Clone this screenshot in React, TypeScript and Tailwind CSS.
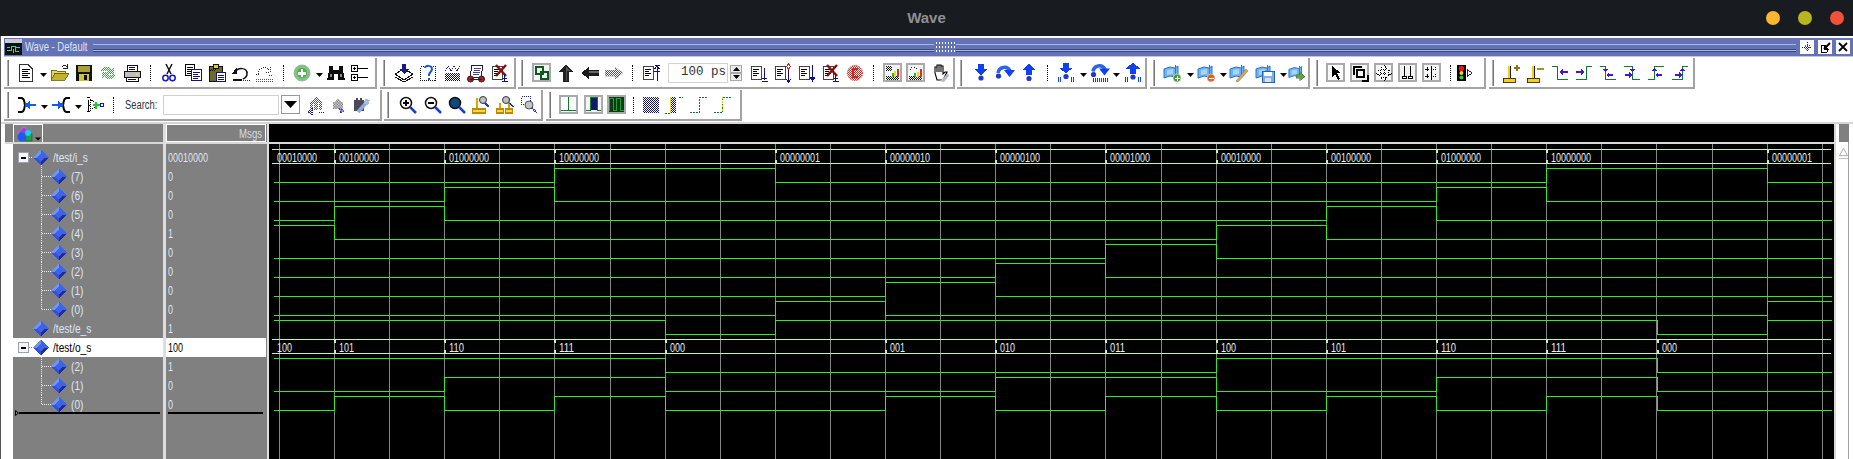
import React from 'react';

const FONT = "font-['Liberation_Sans',Arial,sans-serif]";

// ---------- icon bits ----------
const Ic: React.FC<{ children: React.ReactNode; s?: number }> = ({ children, s = 20 }) => (
  <svg width={s} height={s} viewBox="0 0 20 20" shapeRendering="crispEdges" fill="none">
    {children}
  </svg>
);

const Lines = ({ x = 5, y = 5, n = 4, w = 6, c = '#000' }) => (
  <>
    {Array.from({ length: n }).map((_, i) => (
      <rect key={i} x={x} y={y + i * 2} width={i % 2 ? w - 2 : w} height="1" fill={c} />
    ))}
  </>
);

const Doc = () => (
  <>
    <rect x="2.5" y="3.5" width="10" height="13" fill="#fff" stroke="#444" />
    <Lines x={4} y={6} n={4} w={6} />
  </>
);

const Framed: React.FC<{ children: React.ReactNode; bg?: string }> = ({ children, bg = '#fff' }) => (
  <Ic>
    <rect x="1" y="1" width="17" height="17" fill={bg} stroke="#aaa" strokeWidth="1.5" />
    {children}
  </Ic>
);

const Zoom: React.FC<{ children?: React.ReactNode; fill?: string }> = ({ children, fill = '#fff' }) => (
  <Ic>
    <circle cx="8" cy="8" r="5.5" fill={fill} stroke="#111" strokeWidth="1.5" shapeRendering="auto" />
    <path d="M12 12l6 6" stroke="#1a3fd0" strokeWidth="2.5" shapeRendering="auto" />
    {children}
  </Ic>
);

const StepDown = () => (
  <>
    <path d="M7 1h6v5h4l-7 6-7-6h4z" fill="#1040f0" />
    <circle cx="10" cy="15" r="2.6" fill="#2038c8" shapeRendering="auto" />
  </>
);
const StepUp = () => (
  <>
    <path d="M10 1l7 6h-4v5H7V7H3z" fill="#1040f0" />
    <circle cx="10" cy="15.500" r="2.6" fill="#2038c8" shapeRendering="auto" />
  </>
);
const StepOver = () => (
  <>
    <path d="M3 10c1-6 9-8 12-2" stroke="#2a66e8" strokeWidth="3.500" shapeRendering="auto" />
    <path d="M9 7h11l-5.500 7z" fill="#1040f0" shapeRendering="auto" />
    <circle cx="3.500" cy="13" r="2.600" fill="#2038c8" shapeRendering="auto" />
  </>
);
const Bars = ({ y = 14 }) => (
  <>
    {[2, 4, 15, 17].map((x) => (
      <rect key={x} x={x} y={y} width="1" height="5" fill="#1040f0" />
    ))}
  </>
);

const Flag = () => (
  <>
    <path d="M1 6l6-2 5 1 3-2v9l-3 2-5-1-6 2z" fill="#6fb4f2" stroke="#2a70c8" shapeRendering="auto" />
    <path d="M4 7l6-1v5l-6 1z" fill="#a8d4f8" shapeRendering="auto" />
    <rect x="12" y="2" width="1" height="12" fill="#8a6a30" />
  </>
);
const Badge = ({ c = '#4a9a3a', minus = false }) => (
  <>
    <circle cx="14" cy="15" r="4" fill={c} stroke="#fff" strokeWidth=".5" shapeRendering="auto" />
    <rect x="12" y="14.500" width="5" height="1.500" fill="#fff" />
    {!minus && <rect x="13.800" y="12.800" width="1.500" height="5" fill="#fff" />}
  </>
);

const Cursor: React.FC<{ children?: React.ReactNode }> = ({ children }) => (
  <Ic>
    <rect x="2" y="15" width="12" height="4" fill="#f6cf1a" stroke="#111" strokeWidth=".8" />
    <rect x="7" y="3" width="2" height="12" fill="#f6cf1a" />
    <rect x="9" y="3" width="1" height="12" fill="#222" />
    {children}
  </Ic>
);

const ARROW = '#4a12d8';
const EdgeA: React.FC<{ d: string; children: React.ReactNode }> = ({ d, children }) => (
  <Ic>
    <path d={d} stroke="#0d7d2c" />
    {children}
  </Ic>
);
// small marker triangle sitting on the edge, plus a thin horizontal arrow beside it
const Tri = ({ x, up }: { x: number; up?: boolean }) => (
  <path d={up ? `M${x - 3} 8h7l-3.500-3z` : `M${x - 3} 6h7l-3.500 3z`} fill={ARROW} />
);
const ArrL = ({ x }: { x: number }) => <path d={`M${x} 12l3-3v2h4v2h-4v2z`} fill={ARROW} />;
const ArrR = ({ x }: { x: number }) => <path d={`M${x + 7} 12l-3-3v2h-4v2h4v2z`} fill={ARROW} />;

// ---------- toolbar pieces ----------
const Slot: React.FC<{ children: React.ReactNode; className?: string }> = ({ children, className = 'w-[24px]' }) => (
  <div className={`${className} shrink-0 flex items-center justify-center`}>{children}</div>
);

const Caret = () => (
  <div className="w-[10px] shrink-0 flex items-center justify-center pt-[4px]">
    <svg width="7" height="4" viewBox="0 0 7 4"><path d="M0 0h7L3.500 4z" fill="#000" /></svg>
  </div>
);

const Sep = () => (
  <div className="w-[13px] shrink-0 flex items-center justify-center">
    <div className="h-[16px] border-l border-dotted border-black" />
  </div>
);

const Group: React.FC<{ children: React.ReactNode; className: string }> = ({ children, className }) => (
  <div className={`${className} shrink-0 h-full flex items-center bg-white border-r-2 border-b-2 border-[#a3a3a3]`}>
    <div className="ml-[3px] mr-[5px] w-[2px] h-[26px] bg-[#b0b0b0] border-r border-[#777]" />
    {children}
  </div>
);

const Spin = ({ up }: { up?: boolean }) => (
  <div className="h-[8px] flex items-center justify-center bg-[#ececec] border border-[#a8a8a8]">
    <svg width="7" height="4" viewBox="0 0 7 4">
      <path d={up ? 'M0 4h7L3.500 0z' : 'M0 0h7L3.500 4z'} fill="#000" />
    </svg>
  </div>
);

// ---------- wave data ----------
const I_S: [number, string][] = [
  [273, '00010000'], [334, '00100000'], [444, '01000000'], [554, '10000000'], [775, '00000001'],
  [885, '00000010'], [995, '00000100'], [1105, '00001000'], [1216, '00010000'], [1326, '00100000'],
  [1436, '01000000'], [1546, '10000000'], [1767, '00000001'],
];
const O_S: [number, string][] = [
  [273, '100'], [334, '101'], [444, '110'], [554, '111'], [665, '000'], [885, '001'], [995, '010'],
  [1105, '011'], [1216, '100'], [1326, '101'], [1436, '110'], [1546, '111'], [1657, '000'],
];
const END = 1831;
const GREEN = '#2cef1c';
const BUS = '#c0f4bc';

const bitLine = (segs: [number, boolean][], low: number) => {
  const hi = low - 14 + 0.5;
  const lo = low + 0.5;
  const pts: string[] = [];
  segs.forEach(([x, v], i) => {
    const y = v ? hi : lo;
    const next = i + 1 < segs.length ? segs[i + 1][0] : END;
    pts.push(`${x + 0.5},${y}`, `${next + 0.5},${y}`);
  });
  return pts.join(' ');
};

const Bus = ({ segs, top }: { segs: [number, string][]; top: number }) => (
  <g>
    <path d={`M272 ${top + 0.5}H${END}M272 ${top + 14.5}H${END}`} stroke={BUS} />
    {segs.slice(1).map(([x]) => (
      <path key={x} d={`M${x + 0.5} ${top}v4M${x + 0.5} ${top + 11}v4`} stroke={BUS} strokeWidth="2" />
    ))}
    {segs.map(([x, v], i) => (
      <text
        key={i}
        x={i === 0 ? 277 : x + 5}
        y={top + 12.5}
        fill="#e6f0fc"
        fontSize="13"
        textLength={v.length * 5}
        lengthAdjust="spacingAndGlyphs"
        shapeRendering="auto"
        style={{ fontFamily: "'Liberation Sans', Arial, sans-serif" }}
      >
        {v}
      </text>
    ))}
  </g>
);

const WaveForm = () => {
  const grid = Array.from({ length: 29 }).map((_, k) => Math.round(278.9 + 55.1 * k) + 0.5);
  const iBits = [7, 6, 5, 4, 3, 2, 1, 0];
  const oBits = [2, 1, 0];
  return (
    <svg width="1565" height="315" viewBox="269 144 1565 315" className="block" shapeRendering="crispEdges">
      {grid.map((x) => (
        <path key={x} d={`M${x} 144V459`} stroke="#858585" />
      ))}
      <Bus segs={I_S} top={149} />
      {iBits.map((bit, k) => (
        <polyline
          key={bit}
          fill="none"
          stroke={GREEN}
          points={bitLine(I_S.map(([x, v]) => [x, v[7 - bit] === '1'] as [number, boolean]), 182 + 19 * k)}
        />
      ))}
      <polyline
        fill="none"
        stroke={GREEN}
        points={bitLine([[273, true], [665, false], [775, true], [1657, false], [1767, true]], 334)}
      />
      <Bus segs={O_S} top={339} />
      {oBits.map((bit, k) => (
        <polyline
          key={bit}
          fill="none"
          stroke={GREEN}
          points={bitLine(O_S.map(([x, v]) => [x, v[2 - bit] === '1'] as [number, boolean]), 372 + 19 * k)}
        />
      ))}
    </svg>
  );
};

// ---------- signal list ----------
const Diamond = ({ cx }: { cx: number }) => (
  <g transform={`translate(${cx} 9.500)`}>
    <path d="M0 -8L-8 0H0z" fill="#6e94f4" />
    <path d="M0 -8L8 0H0z" fill="#3c66e6" />
    <path d="M-8 0L0 8V0z" fill="#3550d4" />
    <path d="M8 0L0 8V0z" fill="#1e2c9c" />
    <path d="M0 -4L4 0L0 4L-4 0z" fill="#3f63e8" />
  </g>
);

type Row = { name: string; val: string; kind: 'bus' | 'child' | 'last' | 'plain'; sel?: boolean };
const ROWS: Row[] = [
  { name: '/test/i_s', val: '00010000', kind: 'bus' },
  { name: '(7)', val: '0', kind: 'child' },
  { name: '(6)', val: '0', kind: 'child' },
  { name: '(5)', val: '0', kind: 'child' },
  { name: '(4)', val: '1', kind: 'child' },
  { name: '(3)', val: '0', kind: 'child' },
  { name: '(2)', val: '0', kind: 'child' },
  { name: '(1)', val: '0', kind: 'child' },
  { name: '(0)', val: '0', kind: 'last' },
  { name: '/test/e_s', val: '1', kind: 'plain' },
  { name: '/test/o_s', val: '100', kind: 'bus', sel: true },
  { name: '(2)', val: '1', kind: 'child' },
  { name: '(1)', val: '0', kind: 'child' },
  { name: '(0)', val: '0', kind: 'last' },
];

const Glyph = ({ row }: { row: Row }) => {
  const child = row.kind === 'child' || row.kind === 'last';
  const w = child ? 57 : 39;
  return (
    <svg width={w} height="19" viewBox={`0 0 ${w} 19`} className="shrink-0" shapeRendering="crispEdges" fill="none">
      {row.kind === 'bus' && (
        <>
          <path d="M16 9.500H20" stroke={row.sel ? '#888' : '#eee'} strokeDasharray="1 1" />
          <rect x="5.500" y="4.500" width="10" height="10" fill="#f4f6fa" stroke="#9aa0b0" />
          <rect x="8" y="9" width="5" height="2" fill="#000" />
          <path d="M28.500 15V19" stroke="#eee" strokeDasharray="1 1" />
        </>
      )}
      {child && (
        <>
          <path d={row.kind === 'last' ? 'M28.500 0V9.500H38' : 'M28.500 0V19M28.500 9.500H38'} stroke="#eee" strokeDasharray="1 1" />
          <Diamond cx={46} />
        </>
      )}
      {!child && <Diamond cx={28} />}
    </svg>
  );
};

const Narrow: React.FC<{ children: React.ReactNode; k?: string }> = ({ children, k = 'scale-x-[0.8]' }) => (
  <span className={`inline-block whitespace-nowrap origin-left ${k}`}>{children}</span>
);

// ---------- page ----------
export default function App() {
  return (
    <div className={`w-[1853px] h-[459px] overflow-hidden flex flex-col bg-white text-[12px] ${FONT}`}>
      <svg width="0" height="0" className="absolute">
        <defs>
          {[
            ['dGreen', '#4aa24a'],
            ['dGray', '#555'],
            ['dBlack', '#111'],
            ['dRed', '#d8201c'],
            ['dBlue', '#1a1acc'],
            ['dNavy', '#101080'],
          ].map(([id, c]) => (
            <pattern key={id} id={id} width="2" height="2" patternUnits="userSpaceOnUse">
              <rect width="1" height="1" fill={c} />
              <rect x="1" y="1" width="1" height="1" fill={c} />
            </pattern>
          ))}
        </defs>
      </svg>

      {/* Desktop title bar */}
      <div className="h-[36px] shrink-0 bg-[#181b20] flex items-center relative">
        <div className="flex-1 text-center text-[15px] font-bold text-[#8f9092]">Wave</div>
        <div className="absolute right-[9px] top-[11px] flex gap-[18px]">
          <div className="w-[14px] h-[14px] rounded-full bg-[#fbb62f]" />
          <div className="w-[14px] h-[14px] rounded-full bg-[#b9b521]" />
          <div className="w-[14px] h-[14px] rounded-full bg-[#f2503a]" />
        </div>
      </div>

      <div className="flex-1 min-h-0 flex flex-col border-l border-[#555] pt-[2px]">
        {/* Wave - Default bar */}
        <div className="h-[19px] ml-[3px] shrink-0 bg-[#6373b6] flex items-center border-b border-[#c8c8c8]">
          <div className="w-[17px] h-[16px] ml-[1px] shrink-0">
            <svg width="17" height="16" viewBox="0 0 17 16" shapeRendering="crispEdges">
              <rect width="17" height="16" fill="#111" />
              <rect x="0" y="0" width="17" height="4" fill="#c8ccd8" />
              <path d="M2 11.500H6V7.500H10V12.500H14" stroke="#1fe07a" fill="none" />
              <path d="M2 8.500H5M8 13.500V9.500M11 8.500H15" stroke="#37c8e8" fill="none" />
            </svg>
          </div>
          <div className="w-[71px] shrink-0 pl-[3px] text-[13px] text-[#dfe3f6]">
            <Narrow k="scale-x-[0.73]">Wave - Default</Narrow>
          </div>
          <div className="flex-1 h-[7px] border-y border-[#a9b6ef] bg-[#6373b6] shadow-[0_1px_0_#3d4778,inset_0_-1px_0_#3d4778]" />
          <div className="w-[20px] h-[12px] mx-[1px] shrink-0 bg-[radial-gradient(#fff_1px,transparent_1px)] bg-[length:3px_4px]" />
          <div className="flex-1 h-[7px] border-y border-[#a9b6ef] bg-[#6373b6] shadow-[0_1px_0_#3d4778,inset_0_-1px_0_#3d4778]" />
          <div className="flex gap-[4px] ml-[4px] mr-[3px] shrink-0">
            <div className="w-[14px] h-[14px] bg-white flex items-center justify-center">
              <svg width="10" height="10" viewBox="0 0 10 10" shapeRendering="crispEdges" fill="none">
                <path d="M5 0v10M0 5h10" stroke="#222" strokeDasharray="1 1" />
                <path d="M3 3h4v4H3z" stroke="#666" strokeDasharray="1 1" />
              </svg>
            </div>
            <div className="w-[14px] h-[14px] bg-white flex items-center justify-center">
              <svg width="11" height="11" viewBox="0 0 11 11" shapeRendering="crispEdges" fill="none">
                <path d="M1 3.500h5M1.500 3v7M1 10h6M7 7v3" stroke="#000" />
                <path d="M4 7L10 1" stroke="#000" strokeWidth="2" shapeRendering="auto" />
                <path d="M4 3v5h5z" fill="#000" />
              </svg>
            </div>
            <div className="w-[14px] h-[14px] bg-white flex items-center justify-center">
              <svg width="10" height="10" viewBox="0 0 10 10">
                <path d="M1 1l8 8M9 1L1 9" stroke="#000" strokeWidth="1.800" />
              </svg>
            </div>
          </div>
        </div>

        {/* Toolbar row 1 */}
        <div className="h-[31px] mt-[1px] shrink-0 flex pl-[3px]">
          <Group className="w-[373px] mr-[3px]">
            <Slot><Ic><path d="M3.500 1.500H12L16.500 6V18.500H3.500z" fill="#fff" stroke="#333" /><Lines x={6} y={6} n={5} w={8} /></Ic></Slot>
            <Caret />
            <Slot><Ic><path d="M1 7h5l1 1h8v2H5L1 17z" fill="#e8d860" stroke="#5a5a10" strokeWidth=".8" /><path d="M1 17l4-7h14l-4 7z" fill="#c4b22a" stroke="#5a5a10" strokeWidth=".8" /><path d="M12 4c2-2 4-2 5 0M17 1v4h-4" stroke="#222" /></Ic></Slot>
            <Slot><Ic><rect x="2" y="2" width="16" height="16" fill="#111" /><rect x="4" y="3" width="12" height="6" fill="#a8a030" /><rect x="5" y="11" width="10" height="7" fill="#c8c440" /><rect x="10" y="12" width="3" height="5" fill="#111" /></Ic></Slot>
            <Slot><Ic><path d="M3 9c0-5 7-7 11-3l2-2v7h-7l2-2c-3-2-5-1-8 0zM17 11c0 5-7 7-11 3l-2 2V9h7l-2 2c3 2 5 1 8 0z" fill="url(#dGreen)" /></Ic></Slot>
            <Slot><Ic><path d="M5 2h10v6H5z" fill="#fff" stroke="#111" /><path d="M2 8h16v6H2z" fill="#c0c0c0" stroke="#111" /><path d="M4 14h12v4H4z" fill="#fff" stroke="#111" /><path d="M7 4h6M7 6h6M6 16h8" stroke="#111" /><rect x="14" y="10" width="2" height="2" fill="#e8e040" /></Ic></Slot>
            <Sep />
            <Slot><Ic><path d="M7 1l5 10M13 1L8 11" stroke="#111" strokeWidth="1.500" shapeRendering="auto" /><circle cx="6.500" cy="15" r="2.700" stroke="#1414d0" strokeWidth="1.500" shapeRendering="auto" /><circle cx="13.500" cy="15" r="2.700" stroke="#1414d0" strokeWidth="1.500" shapeRendering="auto" /></Ic></Slot>
            <Slot><Ic><rect x="2.500" y="1.500" width="9" height="11" fill="#fff" stroke="#000" /><Lines x={4} y={4} n={4} w={6} /><rect x="8.500" y="6.500" width="10" height="11" fill="#fff" stroke="#101080" /><Lines x={10} y={9} n={4} w={7} c="#101080" /></Ic></Slot>
            <Slot><Ic><rect x="2" y="3" width="13" height="15" fill="#6e6a2a" stroke="#111" /><path d="M6 1h5v4H6z" fill="#e0d040" stroke="#111" /><rect x="9.500" y="9.500" width="9" height="9" fill="#fff" stroke="#101080" /><path d="M11 12h6M11 14h6M11 16h6" stroke="#101080" /><rect x="3" y="6" width="6" height="2" fill="url(#dBlack)" /></Ic></Slot>
            <Slot><Ic><path d="M4 10c2-6 13-6 12 1 0 3-2 4-4 5" stroke="#111" strokeWidth="1.500" shapeRendering="auto" /><path d="M6 4v7H1z" fill="#111" /><rect x="2" y="16" width="9" height="2" fill="#111" /><path d="M12 17h7" stroke="#333" strokeDasharray="1 1" /></Ic></Slot>
            <Slot><Ic><path d="M3 11c0-6 7-8 12-4M15 4v5h-4M1 11h3M14 12h4" stroke="#333" strokeDasharray="1 1" /><path d="M1 16h18M1 18h18" stroke="#555" strokeDasharray="1 1" /></Ic></Slot>
            <Sep />
            <Slot><Ic><circle cx="10" cy="10" r="8" fill="#7cc47e" stroke="#9fb89f" shapeRendering="auto" /><circle cx="10" cy="10" r="5" fill="#56a95a" shapeRendering="auto" /><rect x="6" y="9" width="8" height="2.500" fill="#fff" /><rect x="8.800" y="6" width="2.500" height="8" fill="#fff" /></Ic></Slot>
            <Caret />
            <Slot><Ic><path d="M3 3h4v4h6V3h4v5l2 9h-7V11H8v6H1l2-9z" fill="#0c0c0c" /><rect x="4" y="11" width="2" height="3" fill="#888" /><rect x="14" y="11" width="2" height="3" fill="#888" /></Ic></Slot>
            <Slot><Ic><rect x="1.500" y="2.500" width="6" height="6" fill="#fff" stroke="#000" /><rect x="1.500" y="11.500" width="6" height="6" fill="#fff" stroke="#000" /><path d="M3 5.500h3M4.500 4v3M3 14.500h3M4.500 13v3M8 5.500h10M8 14.500h10" stroke="#000" /></Ic></Slot>
          </Group>
          <Group className="w-[136px] mr-[2px]">
            <Slot className="w-[25px] ml-[1px]"><Ic><path d="M1 11l9-5 9 5-9 6z" fill="#fff" stroke="#111" /><path d="M1 14l9 5 9-5" stroke="#111" /><path d="M8 1h4v5h3l-5 5-5-5h3z" fill="#1a1a8c" /></Ic></Slot>
            <Slot><Ic><rect x="2.500" y="3.500" width="15" height="14" fill="#fff" stroke="#111" strokeDasharray="1 1" /><path d="M7 5c0-3 7-3 7 1 0 3-3 3-3 6v1M11 15v2" stroke="#1a58d8" strokeWidth="2" shapeRendering="auto" /></Ic></Slot>
            <Slot><Ic><rect x="3" y="10" width="15" height="8" fill="url(#dBlack)" /><path d="M3 8l3-5 3 5 3-5 3 5 3-5" stroke="#18188c" strokeDasharray="1 1" /></Ic></Slot>
            <Slot><Ic><path d="M6 2h11l-2 12H4z" fill="#fff" stroke="#222" /><path d="M8 5h7M8 7h6M7 9h7M7 11h6" stroke="#44468c" /><circle cx="4.500" cy="16" r="3" fill="#c01820" stroke="#222" shapeRendering="auto" /><circle cx="15.500" cy="16" r="3" fill="#c01820" stroke="#222" shapeRendering="auto" /><path d="M4 16h12" stroke="#222" /></Ic></Slot>
            <Slot><Ic><Doc /><path d="M6 2l10 11M16 2L6 13" stroke="#8a1010" strokeWidth="2.500" shapeRendering="auto" /><path d="M14.500 11v7M12 18.500h6M12.500 15h4" stroke="#101080" /></Ic></Slot>
          </Group>
          <Group className="w-[437px] mr-[2px]">
            <Slot className="w-[25px] ml-[1px]"><Framed bg="#f4f4f4"><rect x="3.500" y="3.500" width="7" height="7" stroke="#0b5c1c" strokeWidth="2" /><rect x="8.500" y="8.500" width="7" height="7" stroke="#0b5c1c" strokeWidth="2" /></Framed></Slot>
            <Slot><Ic><path d="M10 1l7 8h-4v10H7V9H3z" fill="#222" /><path d="M10 3l4 5h-3v10h-1z" fill="#555" /></Ic></Slot>
            <Slot><Ic><path d="M1 10l8-6v3h10v6H9v3z" fill="#1b1b1b" /><rect x="9" y="8" width="10" height="2" fill="#666" /></Ic></Slot>
            <Slot><Ic><path d="M19 10l-8-6v3H1v6h10v3z" fill="url(#dGray)" stroke="#999" strokeWidth=".4" /></Ic></Slot>
            <Sep />
            <Slot><Ic><Doc /><path d="M16 3v15M13.500 6L16 3l2.500 3M13.500 2.500h5" stroke="#101080" /><path d="M13 8h6" stroke="#101080" /></Ic></Slot>
            <div className="ml-[5px] w-[60px] h-[20px] shrink-0 border border-[#d4d4d4] bg-white flex items-center justify-end pr-[1px] font-['Liberation_Mono',monospace] text-[12.5px] text-[#333]">100 ps</div>
            <div className="ml-[2px] mr-[5px] w-[12px] shrink-0 flex flex-col">
              <Spin up />
              <Spin />
            </div>
            <Slot><Ic><Doc /><path d="M15.500 5v12M13 18.500h6M13 15h5" stroke="#101080" /></Ic></Slot>
            <Slot><Ic><Doc /><path d="M15.500 6v12M13 16l2.500 3 2.500-3" stroke="#101080" /><path d="M15.500 1l2 2.500-2 2.500-2-2.500z" fill="#fff" stroke="#e02020" /></Ic></Slot>
            <Slot><Ic><Doc /><path d="M15.500 2v15M13 14h5l-2.500 4z" stroke="#101080" fill="#101080" /></Ic></Slot>
            <Slot><Ic><Doc /><path d="M6 2l10 11M16 2L6 13" stroke="#8a1010" strokeWidth="2.500" shapeRendering="auto" /><path d="M14.500 11v7M12 18.500h6M12.500 15h4" stroke="#101080" /></Ic></Slot>
            <Slot><Ic><circle cx="10" cy="10" r="7.500" fill="url(#dRed)" stroke="#d8201c" strokeDasharray="1 1" shapeRendering="auto" /><path d="M13 6H8v8h5" stroke="#d8201c" strokeWidth="1.500" /></Ic></Slot>
            <Sep />
            <Slot className="w-[23px] ml-[1px]"><Framed bg="#f2f2f2"><rect x="3" y="13" width="13" height="4" fill="url(#dBlack)" /><rect x="3" y="3" width="6" height="5" fill="url(#dBlack)" /><rect x="11" y="8" width="2" height="6" fill="#e8d820" /><rect x="14" y="6" width="2" height="8" fill="#d83020" /><rect x="9" y="10" width="2" height="4" fill="#30b030" /></Framed></Slot>
            <Slot><Framed bg="#f2f2f2"><rect x="3" y="13" width="13" height="4" fill="url(#dBlack)" /><path d="M4 7c0-4 7-4 7 0v3" stroke="#222" strokeDasharray="1 1" /><rect x="11" y="9" width="2" height="5" fill="#e8d820" /><rect x="14" y="6" width="2" height="8" fill="#d83020" /><rect x="8" y="10" width="2" height="4" fill="#30b030" /></Framed></Slot>
            <Slot><Ic><path d="M5 10V4h2v5-7h2v7-7h2v7-6h2v8l2-2h2l-4 8H7z" fill="#fff" stroke="#000" strokeWidth="1.100" shapeRendering="auto" /><path d="M10 18l8-8 1 3-5 6z" fill="#b4bcc8" shapeRendering="auto" /></Ic></Slot>
          </Group>
          <Group className="w-[190px] mr-[3px]">
            <Slot className="w-[25px] ml-[1px]"><Ic><StepDown /></Ic></Slot>
            <Slot><Ic><StepOver /></Ic></Slot>
            <Slot><Ic><StepUp /></Ic></Slot>
            <Sep />
            <Slot><Ic><g transform="translate(0 -1.500)"><StepDown /></g><Bars /></Ic></Slot>
            <Caret />
            <Slot className="w-[23px]"><Ic><g transform="translate(0 -1.500)"><StepOver /></g><path d="M3 15v4M5 15v4M7 15v4M9 15v4M11 15v4M13 15v4M15 15v4M17 15v4" stroke="#1040f0" /></Ic></Slot>
            <Caret />
            <Slot><Ic><g transform="translate(0 -1.500)"><StepUp /></g><Bars /></Ic></Slot>
          </Group>
          <Group className="w-[160px] mr-[3px]">
            <Slot className="w-[24px] ml-[1px]"><Ic><Flag /><Badge /></Ic></Slot>
            <Caret />
            <Slot className="w-[23px]"><Ic><Flag /><Badge c="#d86428" minus /></Ic></Slot>
            <Caret />
            <Slot className="w-[24px] -ml-[1px]"><Ic><Flag /><path d="M7 18l10-12 2 2-10 11z" fill="#d8a860" stroke="#8a6a30" strokeWidth=".5" shapeRendering="auto" /></Ic></Slot>
            <Slot className="w-[27px]"><Ic><Flag /><rect x="7" y="8" width="12" height="11" fill="#7fb0ea" stroke="#2a60b0" /><rect x="9" y="9" width="8" height="4" fill="#fff" /><rect x="10" y="15" width="6" height="4" fill="#d8e4f4" /></Ic></Slot>
            <Caret />
            <Slot className="w-[18px]"><Ic><Flag /><path d="M9 12h4V9l6 5-6 5v-3H9z" fill="#62a04c" stroke="#3c7030" strokeWidth=".5" /></Ic></Slot>
          </Group>
          <Group className="w-[173px] mr-[3px]">
            <Slot className="w-[24px] ml-[1px]"><Framed bg="#fafafa"><path d="M6 3v11l3-3 3 6 2-1-3-6h4z" fill="#000" /></Framed></Slot>
            <Slot><Framed bg="#f4f4f4"><path d="M4 12V4h8" stroke="#000" strokeWidth="1.500" /><rect x="6.500" y="6.500" width="7" height="7" stroke="#000" strokeWidth="2" /><path d="M18 12v6h-6" stroke="#000" strokeWidth="1.500" /></Framed></Slot>
            <Slot><Framed bg="#f4f4f4"><path d="M10 2l3 4H7zM10 18l3-4H7zM2 10l4 3V7zM18 10l-4 3V7z" fill="#fff" stroke="#000" strokeDasharray="1 1" /><path d="M7 10h6M10 7v6" stroke="#000" strokeDasharray="1 1" /></Framed></Slot>
            <Slot><Framed bg="#f4f4f4"><path d="M6.500 3v10M12.500 3v10" stroke="#000" /><rect x="4.500" y="13.500" width="4" height="2" fill="#fff" stroke="#000" /><rect x="10.500" y="13.500" width="4" height="2" fill="#fff" stroke="#000" /></Framed></Slot>
            <Slot><Framed bg="#f4f4f4"><path d="M3 6h4M3 13h4M5 4v4M5 11v4M9.500 3v14" stroke="#000" /><path d="M11 6h4M11 13h4M13 4v4M13 11v4" stroke="#000" strokeDasharray="1 1" /></Framed></Slot>
            <Sep />
            <Slot className="w-[18px] -ml-[1px]"><Ic><rect x="1" y="1" width="10" height="18" fill="#000" /><circle cx="6" cy="5" r="3" fill="#f01010" shapeRendering="auto" /><circle cx="6" cy="10" r="2.200" fill="#e8d820" shapeRendering="auto" /><circle cx="6" cy="15" r="2.200" fill="#30d040" shapeRendering="auto" /><path d="M12.500 6v8L18 10z" fill="#fff" stroke="#111" /></Ic></Slot>
          </Group>
          <Group className="w-[206px]">
            <Slot className="w-[22px] ml-[1px]"><Cursor><path d="M13 5h6M16 2v6" stroke="#8a7a10" strokeWidth="1.500" /></Cursor></Slot>
            <Slot className="w-[26px]"><Cursor><path d="M12 6h7" stroke="#a89414" strokeWidth="1.500" /></Cursor></Slot>
            <Slot><EdgeA d="M2 3.500h5.500v13H18"><path d="M9 9l4-3.500v2.500h5v2h-5v2.500z" fill={ARROW} /></EdgeA></Slot>
            <Slot><EdgeA d="M2 16.500h10.500v-13H18"><path d="M11 9L7 5.500v2.500H2v2h5v2.500z" fill={ARROW} /></EdgeA></Slot>
            <Slot><EdgeA d="M2 3.500h5.500v13H18"><Tri x={7} /><ArrL x={8} /></EdgeA></Slot>
            <Slot><EdgeA d="M2 3.500h8.500v13H18"><Tri x={10} /><ArrR x={3} /></EdgeA></Slot>
            <Slot><EdgeA d="M2 16.500h6.500v-13H18"><Tri x={8} up /><ArrL x={9} /></EdgeA></Slot>
            <Slot><EdgeA d="M2 16.500h10.500v-13H18"><Tri x={12} up /><ArrR x={5} /></EdgeA></Slot>
          </Group>
        </div>

        {/* Toolbar row 2 */}
        <div className="h-[31px] mt-[1px] shrink-0 flex pl-[3px]">
          <Group className="w-[378px] mr-[2px]">
            <Slot className="w-[24px] ml-[1px]"><Ic><path d="M1 3h3c4 0 3 4 4 7-1 3 0 7-4 7H1" stroke="#000" strokeWidth="2" shapeRendering="auto" /><path d="M7 10l6-4v3h6v2h-6v3z" fill="#0e5cf0" /></Ic></Slot>
            <Caret />
            <Slot><Ic><path d="M19 3h-3c-4 0-3 4-4 7 1 3 0 7 4 7h3" stroke="#000" strokeWidth="2" shapeRendering="auto" /><path d="M13 10L7 6v3H1v2h6v3z" fill="#0e5cf0" /></Ic></Slot>
            <Caret />
            <Slot><Ic><path d="M1.500 2.500h3M3 5v12M1.500 16.500h3M3 10h3" stroke="#000" /><path d="M5 4l8 6-8 6z" fill="#fff" stroke="#000" strokeDasharray="1 1" /><path d="M10 6.500h2v2.500h2.500v2H12v2.500h-2V11H7.500V9H10z" fill="#10d020" /><rect x="15.500" y="8.500" width="3" height="3" fill="#fff" stroke="#1414d0" /></Ic></Slot>
            <Sep />
            <div className="w-[38px] ml-[5px] shrink-0 text-[13px] text-[#30343c]"><Narrow k="scale-x-[0.72]">Search:</Narrow></div>
            <div className="w-[116px] h-[20px] shrink-0 border border-[#d0d0d0] bg-white" />
            <div className="ml-[2px] w-[19px] h-[19px] shrink-0 bg-white border border-[#999] flex items-center justify-center">
              <svg width="13" height="7" viewBox="0 0 13 7"><path d="M0 0h13L6.500 7z" fill="#000" /></svg>
            </div>
            <Slot className="w-[28px] ml-[2px]"><Ic><path d="M10 2l6 5v8h-3V8h-1v7H8V8H7v7H4V7z" fill="url(#dGray)" /><path d="M2 17l4-4v8z" fill="url(#dBlue)" stroke="#1414d0" strokeDasharray="1 1" /><path d="M13 17h5" stroke="#1414d0" strokeDasharray="1 1" /></Ic></Slot>
            <Slot className="w-[16px]"><Ic><path d="M10 2l6 5v8h-3V8h-1v7H8V8H7v7H4V7z" fill="url(#dGray)" /><path d="M12 14l6 3-5 3z" fill="url(#dBlue)" stroke="#1414d0" strokeDasharray="1 1" /></Ic></Slot>
            <Slot className="w-[32px]"><Ic><rect x="2" y="5" width="10" height="11" fill="#4a4a58" /><rect x="4" y="3" width="2" height="3" fill="#4a4a58" /><rect x="8" y="3" width="2" height="3" fill="#4a4a58" /><path d="M6 17l8-9" stroke="#8ea8d8" strokeWidth="3.500" shapeRendering="auto" /><path d="M13 4l5 1-2 5-4-1z" fill="#a8bce0" /></Ic></Slot>
          </Group>
          <Group className="w-[159px] mr-[3px]">
            <Slot className="w-[26px] ml-[1px]"><Zoom><path d="M5 8h6M8 5v6" stroke="#000" strokeWidth="2" /></Zoom></Slot>
            <Slot><Zoom><rect x="5" y="7" width="6" height="2" fill="#000" /></Zoom></Slot>
            <Slot><Zoom fill="#0e4a80" /></Slot>
            <Slot><Ic><path d="M5.500 3v11" stroke="#d8a800" strokeWidth="2" /><rect x="1.500" y="14" width="13" height="4" fill="#f6d84a" stroke="#c08800" strokeWidth="1.500" /><circle cx="12" cy="5" r="3.500" fill="#c0c0c8" stroke="#333" shapeRendering="auto" /><path d="M14 8l4 4" stroke="#1a3fd0" strokeWidth="1.500" /></Ic></Slot>
            <Slot><Ic><path d="M4.500 8v6M13.500 3v11" stroke="#d8a800" strokeWidth="2" /><rect x="1.500" y="14" width="7" height="4" fill="#f6d84a" stroke="#c08800" strokeWidth="1.500" /><rect x="10.500" y="14" width="7" height="4" fill="#f6d84a" stroke="#c08800" strokeWidth="1.500" /><circle cx="11" cy="5" r="3.500" fill="#c0c0c8" stroke="#333" shapeRendering="auto" /><path d="M15 8l3 4" stroke="#1a3fd0" strokeWidth="1.500" /></Ic></Slot>
            <Slot><Ic><rect x="2.500" y="1.500" width="9" height="8" stroke="#1414b0" strokeDasharray="1 1" /><circle cx="10" cy="10" r="4" fill="#c4c4c8" stroke="#555" shapeRendering="auto" /><path d="M13 13l5 5" stroke="#1a3fd0" strokeWidth="2" strokeDasharray="1 1" /></Ic></Slot>
          </Group>
          <Group className="w-[196px]">
            <Slot className="w-[24px] ml-[1px]"><Framed bg="#fdfdfd"><path d="M2 15.500h15M9.500 2v13" stroke="#0d7d2c" strokeWidth="1.200" /></Framed></Slot>
            <Slot className="w-[25px]"><Framed bg="#f4f4f4"><rect x="6" y="2" width="7" height="13" fill="#101a6c" /><path d="M2 15.500h4V2.500h7v13h4" stroke="#0d7d2c" /></Framed></Slot>
            <Slot className="w-[21px]"><Framed bg="#0c3c14"><path d="M2 15.500V3h4v12h3V3h4v12h4" stroke="#1ea03c" /></Framed></Slot>
            <Sep />
            <Slot className="w-[22px]"><Ic><rect x="2" y="2" width="16" height="16" fill="#fff" /><rect x="2" y="2" width="16" height="16" fill="url(#dNavy)" /></Ic></Slot>
            <Slot className="w-[24px]"><Ic><path d="M1 18h5M15 2h4" stroke="#0d7d2c" strokeDasharray="2 1" /><rect x="7" y="2" width="5" height="16" fill="url(#dNavy)" /><rect x="6" y="2" width="1" height="16" fill="#e8d820" /></Ic></Slot>
            <Slot className="w-[25px]"><Ic><path d="M1 17.500h9V2.500h9" stroke="#0d7d2c" strokeDasharray="2 1" /></Ic></Slot>
            <Slot className="w-[23px]"><Ic><path d="M1 17.500h8M9.500 17V2.500" stroke="#0d7d2c" strokeDasharray="2 1" /><path d="M9.500 2v15" stroke="#e8d820" strokeDasharray="2 2" /><path d="M10 2.500h9" stroke="#0d7d2c" strokeDasharray="2 1" /></Ic></Slot>
          </Group>
        </div>

        <div className="h-[3px] shrink-0 border-b-2 border-[#d6d6d6]" />

        {/* Wave panel */}
        <div className="flex-1 min-h-0 flex pl-[4px]">
          {/* names */}
          <div className="w-[158px] shrink-0 flex flex-col">
            <div className="h-[18px] shrink-0 bg-[#808080] pl-[8px]">
              <div className="w-[30px] h-[18px] border-t border-x border-white flex items-end">
                <svg width="28" height="17" viewBox="0 0 28 17" className="shrink-0" shapeRendering="auto">
                  <path d="M4 8l6-6 6 6-6 6z" fill="#a040d8" stroke="#c060e8" />
                  <rect x="11" y="9" width="7" height="7" fill="#20a040" stroke="#106020" strokeWidth=".6" />
                  <circle cx="8" cy="12" r="4.500" fill="#1c5cf0" />
                  <circle cx="14" cy="8" r="3" fill="#18d0f0" />
                  <path d="M21 12.500h6l-3 3z" fill="#000" />
                </svg>
              </div>
            </div>
            <div className="h-[2px] shrink-0 bg-[#d8d8d8]" />
            <div className="flex-1 ml-[8px] bg-[#808080] pt-[4px] flex flex-col text-[13px]">
              {ROWS.map((row, i) => (
                <div key={i} className={`h-[19px] shrink-0 flex items-center ${row.sel ? 'bg-white text-black' : 'text-[#dfe6f4]'}`}>
                  <Glyph row={row} />
                  <div className="ml-[1px]">
                    <Narrow k="scale-x-[0.78]">{row.name}</Narrow>
                  </div>
                </div>
              ))}
              <div className="h-[6px] -mt-[4px] ml-[2px] mr-[3px] flex items-center">
                <svg width="4" height="6" viewBox="0 0 4 6" className="shrink-0"><path d="M.5.500V5.500L3.500 3z" fill="#808080" stroke="#000" /></svg>
                <div className="flex-1 h-[2px] bg-black" />
              </div>
            </div>
          </div>
          <div className="w-[3px] shrink-0 bg-[#dedede]" />
          {/* values */}
          <div className="w-[101px] shrink-0 flex flex-col">
            <div className="h-[18px] shrink-0 bg-[#808080]">
              <div className="w-[100px] h-[18px] border border-white flex items-center justify-end pr-[3px] pt-[2px] text-[13px] text-[#d4dce8]">
                <span className="inline-block origin-right scale-x-[0.74]">Msgs</span>
              </div>
            </div>
            <div className="h-[2px] shrink-0 bg-[#d8d8d8]" />
            <div className="flex-1 bg-[#808080] pt-[4px] flex flex-col text-[13px]">
              {ROWS.map((row, i) => (
                <div key={i} className={`h-[19px] shrink-0 w-[100px] flex items-center pl-[2px] ${row.sel ? 'bg-white text-black' : 'text-[#dfe6f4]'}`}>
                  <Narrow k="scale-x-[0.69]">{row.val}</Narrow>
                </div>
              ))}
              <div className="h-[2px] -mt-[2px] ml-[2px] mr-[4px] bg-black" />
            </div>
          </div>
          <div className="w-[2px] shrink-0 bg-[#dedede]" />
          {/* waves */}
          <div className="w-[1565px] shrink-0 flex flex-col">
            <div className="h-[18px] shrink-0 bg-black" />
            <div className="h-[2px] shrink-0 bg-[#d8d8d8]" />
            <div className="flex-1 bg-black overflow-hidden">
              <WaveForm />
            </div>
          </div>
          {/* scrollbar */}
          <div className="w-[18px] shrink-0 flex flex-col pl-[3px] pr-[3px] border-l-2 border-[#d8d8d8]">
            <div className="h-[18px] shrink-0 bg-[#808080]" />
            <div className="flex-1 pt-[4px] border-r border-[#a0a0a0]">
              <div className="h-[13px] flex items-center justify-center border-b border-[#c0c0c0]">
                <svg width="11" height="10" viewBox="0 0 11 10"><path d="M5.500 .500L10.500 9.500H.500z" fill="#fff" stroke="#999" /></svg>
              </div>
            </div>
          </div>
        </div>
      </div>
    </div>
  );
}
